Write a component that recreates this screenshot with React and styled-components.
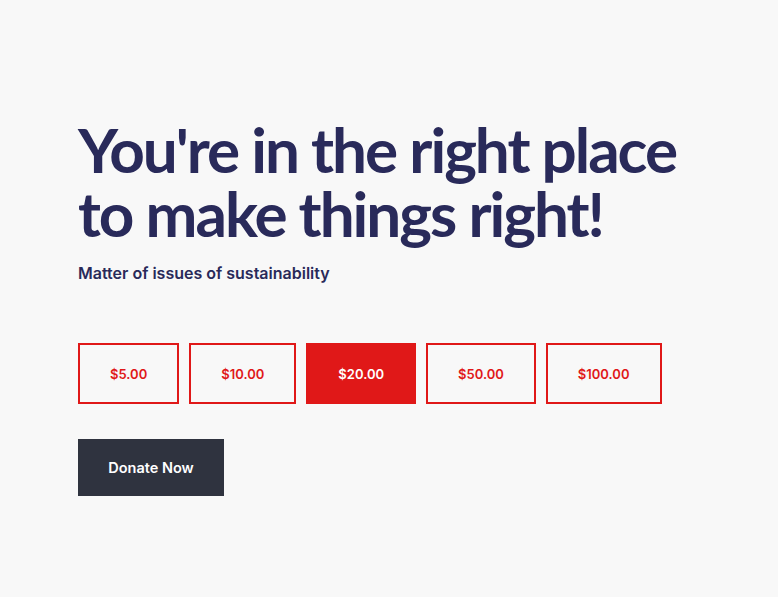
import React, { useState } from 'react';
import styled, { createGlobalStyle } from 'styled-components';

const GlobalStyle = createGlobalStyle`
  html, body {
    margin: 0;
    padding: 0;
    background: #f8f8f8;
  }
`;

const amounts = ['$5.00', '$10.00', '$20.00', '$50.00', '$100.00'];

const App = () => {
  const [selected, setSelected] = useState(2);

  return (
    <Page>
      <GlobalStyle />
      <Title>
        You're in the right place
        <br />
        to make things right!
      </Title>
      <Subtitle>Matter of issues of sustainability</Subtitle>
      <Amounts>
        {amounts.map((amount, i) => (
          <Amount
            key={amount}
            $active={i === selected}
            onClick={() => setSelected(i)}
          >
            {amount}
          </Amount>
        ))}
      </Amounts>
      <DonateButton>Donate Now</DonateButton>
    </Page>
  );
};

export default App;

const Page = styled.div`
  min-height: 597px;
  box-sizing: border-box;
  padding: 117px 78px 0;
  background: #f8f8f8;
`;

const Title = styled.h1`
  margin: 0;
  font-family: Lato, 'Liberation Sans', sans-serif;
  font-weight: 700;
  font-size: 62px;
  line-height: 64px;
  letter-spacing: -2px;
  white-space: nowrap;
  color: #292a5a;
`;

const Subtitle = styled.p`
  margin: 18px 0 0;
  font-family: Inter, 'Liberation Sans', sans-serif;
  font-weight: 600;
  font-size: 16px;
  line-height: 20px;
  letter-spacing: 0;
  color: #292a5a;
`;

const Amounts = styled.div`
  display: flex;
  gap: 10px;
  margin-top: 60px;
`;

const Amount = styled.button`
  box-sizing: border-box;
  height: 61px;
  padding: 0 30px;
  border: 2px solid #e01818;
  background: ${(p) => (p.$active ? '#e01818' : 'transparent')};
  color: ${(p) => (p.$active ? '#ffffff' : '#e01818')};
  font-family: Inter, 'Liberation Sans', sans-serif;
  font-weight: 600;
  font-size: 13px;
  cursor: pointer;
`;

const DonateButton = styled.button`
  display: block;
  box-sizing: border-box;
  margin-top: 35px;
  width: 146px;
  height: 57px;
  border: none;
  background: #2f333f;
  color: #ffffff;
  font-family: Inter, 'Liberation Sans', sans-serif;
  font-weight: 600;
  font-size: 14.5px;
  cursor: pointer;
`;
